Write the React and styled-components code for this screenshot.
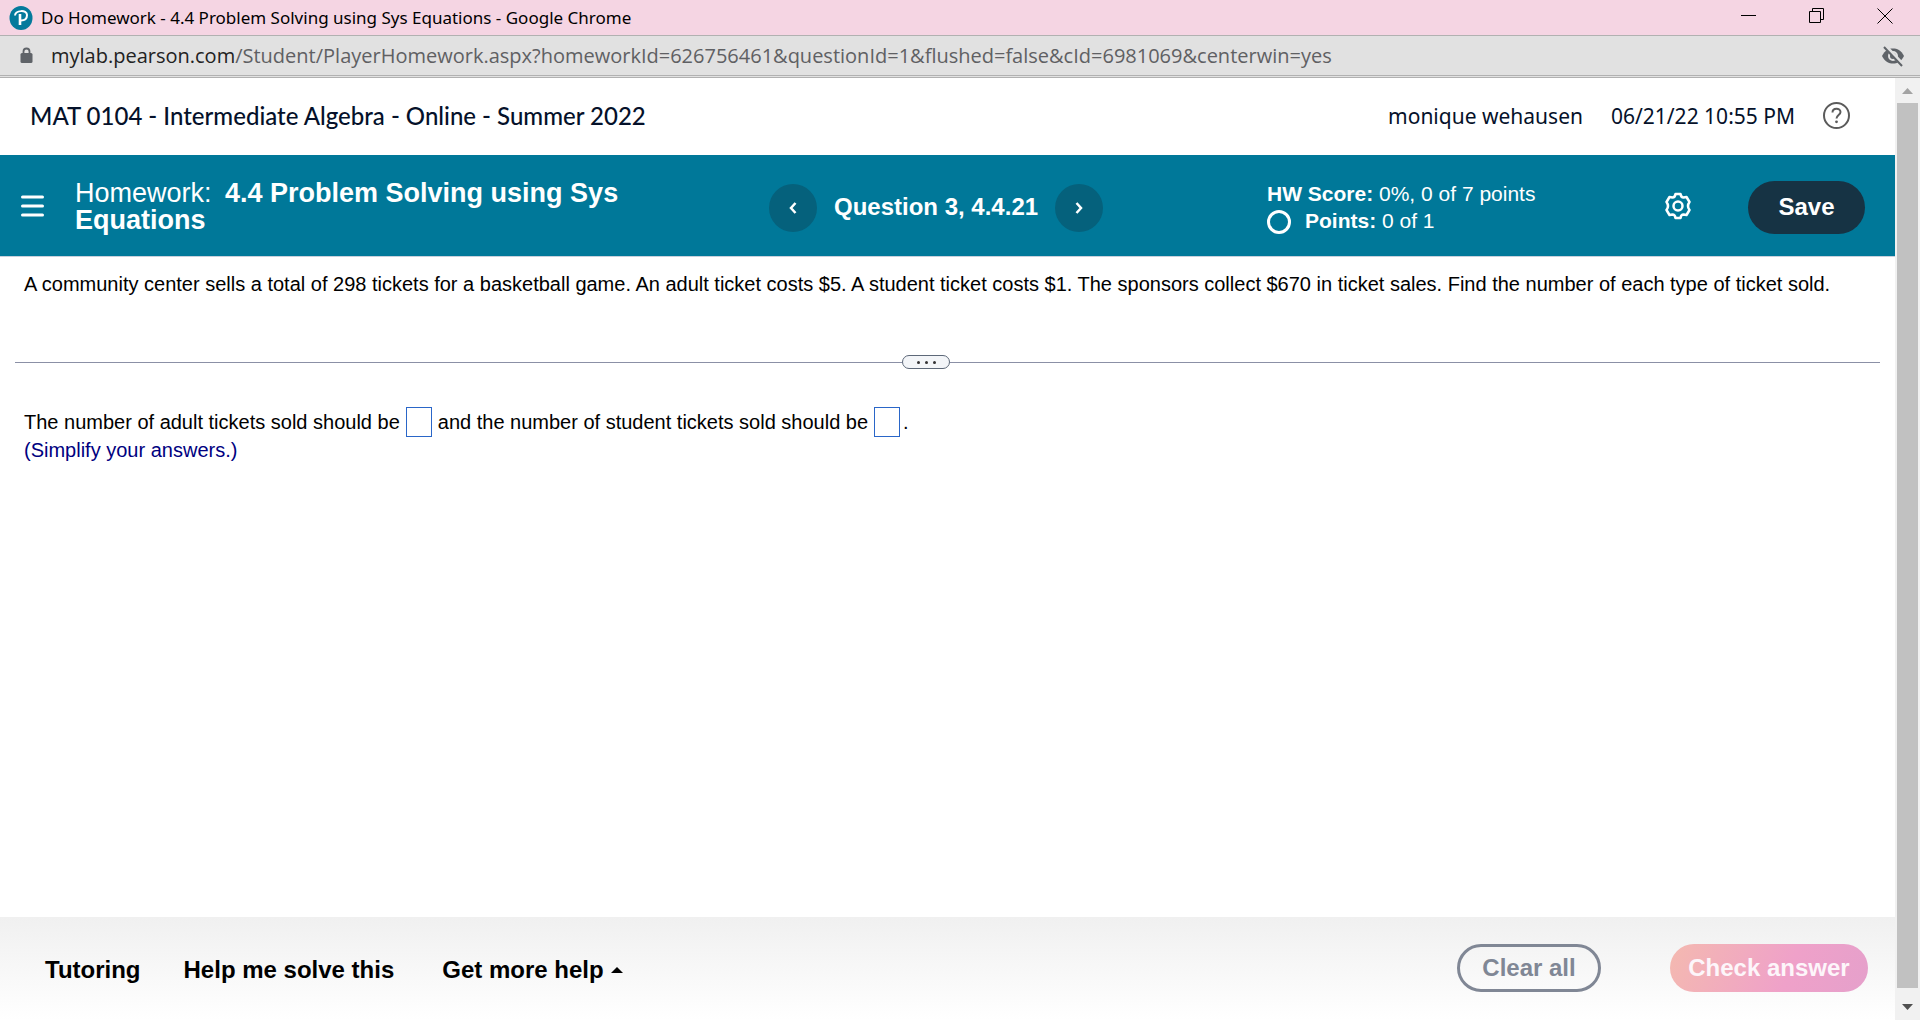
import React from 'react'
import styled, { createGlobalStyle } from 'styled-components'

const GlobalStyle = createGlobalStyle`
  * {
    box-sizing: border-box;
  }
  body {
    margin: 0;
    background: #fff;
    color: #000;
    font-family: "Liberation Sans", Arial, sans-serif;
  }
  button {
    padding: 0;
    border: none;
    background: none;
    color: inherit;
    font-family: inherit;
    cursor: pointer;
  }
`

const Window = styled.div`
  min-height: 100vh;
  display: flex;
  flex-direction: column;
`

const TitleBar = styled.div`
  height: 36px;
  padding: 0 27px 0 9px;
  display: flex;
  align-items: center;
  background: #f5d5e3;
  border-bottom: 1px solid #b1b1b1;
  font-family: "Noto Sans", sans-serif;
  font-size: 17px;
`

const TitleText = styled.span`
  flex: 1;
  margin-left: 8px;
`

const WindowButtons = styled.div`
  display: flex;
  gap: 52px;
  padding-bottom: 4px;

  button {
    display: flex;
  }
`

const AddressBar = styled.div`
  height: 42px;
  padding: 0 15px 0 20px;
  display: flex;
  align-items: center;
  background: #e1e1e1;
  border-bottom: 3px double #b1b1b1;
  color: #5f6063;
  font-family: "Open Sans", sans-serif;
  font-size: 20px;
`

const Url = styled.span`
  flex: 1;
  margin-left: 18px;

  b {
    color: #222;
    font-weight: 400;
  }
`

const Viewport = styled.div`
  flex: 1;
  display: flex;
`

const Page = styled.div`
  flex: 1;
  display: flex;
  flex-direction: column;
`

const CourseHeader = styled.header`
  height: 77px;
  padding: 0 45px 2px 30px;
  display: flex;
  align-items: center;
  color: #05112a;
  font-family: "Noto Sans", sans-serif;
  font-size: 21px;
`

const CourseName = styled.h1`
  flex: 1;
  margin: 0;
  font-family: Lato, sans-serif;
  font-size: 24px;
  font-weight: 500;
`

const UserName = styled.span`
  margin-right: 28px;
`

const HelpButton = styled.button`
  display: flex;
  margin-left: 28px;
`

const HomeworkBar = styled.section`
  height: 102px;
  padding: 4px 30px 0 21px;
  display: grid;
  grid-template-columns: 54px 694fr 498fr 398fr 83px 117px;
  align-items: center;
  background: #007899;
  border-bottom: 1px solid #c7d0dc;
  color: #fff;
`

const IconButton = styled.button`
  display: flex;
  padding-bottom: 4px;
`

const HomeworkTitle = styled.h2`
  max-width: 560px;
  margin: 0;
  padding-bottom: 2px;
  font-size: 27px;
  line-height: 27px;

  span {
    margin-right: 6px;
    font-weight: 400;
  }
`

const QuestionNav = styled.nav`
  display: flex;
  align-items: center;
  gap: 17px;
`

const QuestionName = styled.span`
  padding-bottom: 2px;
  font-size: 24px;
  font-weight: 700;
`

const RoundButton = styled.button`
  width: 48px;
  height: 48px;
  display: flex;
  align-items: center;
  justify-content: center;
  border-radius: 50%;
  background: #05617c;
`

const Score = styled.div`
  padding-bottom: 2px;
  font-size: 21px;
  line-height: 27px;
`

const PointsRow = styled.div`
  display: flex;
  align-items: flex-end;
  gap: 14px;
`

const PointsRing = styled.span`
  width: 24px;
  height: 24px;
  border: 3px solid #fff;
  border-radius: 50%;
`

const SaveButton = styled.button`
  height: 53px;
  padding-bottom: 2px;
  border-radius: 27px;
  background: #163344;
  font-size: 24px;
  font-weight: 700;
`

const Question = styled.p`
  margin: 0;
  padding: 13px 24px 0;
  font-size: 20px;
  line-height: 28px;
`

const Divider = styled.div`
  height: 14px;
  margin: 57px 15px 38px;
  display: flex;
  align-items: center;

  &::before,
  &::after {
    content: "";
    flex: 1;
    height: 1px;
    background: #8b90a6;
  }
  &::before {
    flex: 887;
  }
  &::after {
    flex: 930;
  }
`

const DividerHandle = styled.button`
  width: 48px;
  height: 14px;
  display: flex;
  align-items: center;
  justify-content: center;
  gap: 5px;
  border: 1px solid #5d6878;
  border-radius: 7px;
  background: #f3f5f8;

  i {
    width: 3px;
    height: 3px;
    border-radius: 50%;
    background: #333;
  }
`

const Answer = styled.form`
  flex: 1;
  padding: 0 24px;
  font-size: 20px;
  line-height: 26px;
`

const AnswerLine = styled.div`
  display: flex;
  align-items: center;
`

const AnswerInput = styled.input`
  width: 26px;
  height: 30px;
  margin: 0 ${props => props.$last ? '3px' : '6px'} 0 6px;
  padding: 0;
  border: 1px solid #2a66c8;
  background: #fff;
  font-size: 20px;
  text-align: center;
`

const Hint = styled.div`
  color: #00007f;
`

const Footer = styled.footer`
  height: 103px;
  padding: 0 27px 0 45px;
  display: flex;
  align-items: center;
  background: linear-gradient(#f0f0f0, #fff);
`

const HelpLink = styled.button`
  display: flex;
  align-items: center;
  gap: 7px;
  margin-right: ${props => props.$gap || 0}px;
  padding-top: 2px;
  font-size: 24px;
  font-weight: 700;
`

const PillButton = styled.button`
  width: ${props => props.$width}px;
  height: 48px;
  border-radius: 24px;
  font-size: 24px;
  font-weight: 700;
`

const FooterActions = styled.div`
  display: flex;
  gap: 69px;
  margin-left: auto;
  padding-bottom: 2px;
`

const ClearButton = styled(PillButton)`
  border: 3px solid #808795;
  color: #808795;
`

const CheckButton = styled(PillButton)`
  background: linear-gradient(110deg, #f4b9b0, #efa1c9 60%, #e5a0cb);
  color: #fdf6fa;
`

const Scrollbar = styled.div`
  width: 25px;
  padding: 0 2px;
  display: flex;
  flex-direction: column;
  align-items: center;
  background: #f1f1f1;

  svg {
    flex: none;
  }
`

const Thumb = styled.div`
  flex: 1;
  align-self: stretch;
  background: #c1c1c1;
`

const PearsonLogo = () => (
  <svg width="24" height="24" viewBox="0 0 24 24">
    <ellipse cx="12" cy="12" rx="11.500" ry="12" fill="#047a9c" />
    <path d="M6 9.500C6.500 4 18 3.500 18 9c0 4-3 5.500-6 5.500" fill="none" stroke="#fff" strokeWidth="2" />
    <path d="M11 8v11" stroke="#fff" strokeWidth="2.600" />
  </svg>
)

const LockIcon = () => (
  <svg width="13" height="17" viewBox="0 0 13 17">
    <path d="M3.500 7V4.500a3 3 0 0 1 6 0V7" fill="none" stroke="#5f6368" strokeWidth="1.800" />
    <rect x="0.500" y="6" width="12" height="10" rx="1.500" fill="#5f6368" />
  </svg>
)

const GearIcon = () => (
  <svg width="26" height="28" viewBox="0 0 26 28" fill="none" stroke="#fff" strokeWidth="2.500">
    <path d="M10.500 2h5q.5 3.500 3 3.500l3-.5 3 5q-3 4 0 8l-3 5-3-.5q-2.500 0-3 3.500h-5q-.5-3.500-3-3.500l-3 .5-3-5q3-4 0-8l3-5 3 .5q2.500 0 3-3.500z" strokeLinejoin="round" />
    <circle cx="13" cy="14" r="4.500" />
  </svg>
)

const Chevron = ({ d }) => (
  <svg width="10" height="14" viewBox="0 0 10 14">
    <path d={d} fill="none" stroke="#fff" strokeWidth="2.500" />
  </svg>
)

const App = () => {
  return (
    <Window>
      <GlobalStyle />
      <TitleBar>
        <PearsonLogo />
        <TitleText>Do Homework - 4.4 Problem Solving using Sys Equations - Google Chrome</TitleText>
        <WindowButtons>
          <button aria-label="Minimize">
            <svg width="16" height="16"><path d="M0 7.500h15" stroke="#000" /></svg>
          </button>
          <button aria-label="Restore">
            <svg width="16" height="16" fill="none" stroke="#000"><path d="M.5 3.500h11v11H.5zM3.500 3.500v-3h11v11h-3" /></svg>
          </button>
          <button aria-label="Close">
            <svg width="16" height="16"><path d="M.5.5l15 15M15.500.5l-15 15" stroke="#000" /></svg>
          </button>
        </WindowButtons>
      </TitleBar>
      <AddressBar>
        <LockIcon />
        <Url><b>mylab.pearson.com</b>/Student/PlayerHomework.aspx?homeworkId=626756461&amp;questionId=1&amp;flushed=false&amp;cId=6981069&amp;centerwin=yes</Url>
        <svg width="24" height="24" viewBox="0 0 24 24">
          <path d="M1 12C4 6 8 4.500 12 4.500S20 6 23 12c-3 6-7 7.500-11 7.500S4 18 1 12z" fill="#5f6368" />
          <circle cx="12" cy="12" r="4" fill="none" stroke="#e1e1e1" strokeWidth="2" />
          <path d="M4 2l18 19" stroke="#e1e1e1" strokeWidth="4" />
          <path d="M3 3l18 19" stroke="#5f6368" strokeWidth="2" />
        </svg>
      </AddressBar>
      <Viewport>
        <Page>
          <CourseHeader>
            <CourseName>MAT 0104 - Intermediate Algebra - Online - Summer 2022</CourseName>
            <UserName>monique wehausen</UserName>
            <span>06/21/22 10:55 PM</span>
            <HelpButton aria-label="Help">
              <svg width="27" height="27" viewBox="0 0 27 27" fill="none" stroke="#5b5b5b" strokeWidth="2">
                <circle cx="13.500" cy="13.500" r="12.500" />
                <path d="M9.500 10.500c0-5 8-5 8-.5 0 3-4 3-4 6.500" />
                <circle cx="13.500" cy="19.800" r="1.400" fill="#5b5b5b" stroke="none" />
              </svg>
            </HelpButton>
          </CourseHeader>
          <HomeworkBar>
            <IconButton aria-label="Menu">
              <svg width="23" height="22" stroke="#fff" strokeWidth="3" strokeLinecap="round"><path d="M1.500 2h20M1.500 11h20M1.500 20h20" /></svg>
            </IconButton>
            <HomeworkTitle><span>Homework:</span> 4.4 Problem Solving using Sys Equations</HomeworkTitle>
            <QuestionNav>
              <RoundButton aria-label="Previous question"><Chevron d="M7.500 2L3 7l4.500 5" /></RoundButton>
              <QuestionName>Question 3, 4.4.21</QuestionName>
              <RoundButton aria-label="Next question"><Chevron d="M2.500 2L7 7l-4.500 5" /></RoundButton>
            </QuestionNav>
            <Score>
              <div><b>HW Score:</b> 0%, 0 of 7 points</div>
              <PointsRow><PointsRing /><span><b>Points:</b> 0 of 1</span></PointsRow>
            </Score>
            <IconButton aria-label="Settings"><GearIcon /></IconButton>
            <SaveButton>Save</SaveButton>
          </HomeworkBar>
          <Question>
            A community center sells a total of 298 tickets for a basketball game. An adult ticket costs $5. A student ticket costs $1. The sponsors collect $670 in ticket sales. Find the number of each type of ticket sold.
          </Question>
          <Divider>
            <DividerHandle aria-label="Resize"><i /><i /><i /></DividerHandle>
          </Divider>
          <Answer>
            <AnswerLine>
              <label htmlFor="adult">The number of adult tickets sold should be</label>
              <AnswerInput id="adult" />
              <label htmlFor="student">and the number of student tickets sold should be</label>
              <AnswerInput id="student" $last />
              .
            </AnswerLine>
            <Hint>(Simplify your answers.)</Hint>
          </Answer>
          <Footer>
            <HelpLink $gap={43}>Tutoring</HelpLink>
            <HelpLink $gap={48}>Help me solve this</HelpLink>
            <HelpLink>
              Get more help
              <svg width="12" height="6"><path d="M0 6l6-6 6 6z" /></svg>
            </HelpLink>
            <FooterActions>
              <ClearButton $width={144}>Clear all</ClearButton>
              <CheckButton $width={198}>Check answer</CheckButton>
            </FooterActions>
          </Footer>
        </Page>
        <Scrollbar>
          <svg width="21" height="25"><path d="M5 16l5.500-6 5.500 6z" fill="#a3a3a3" /></svg>
          <Thumb />
          <svg width="21" height="32"><path d="M5 16h11l-5.500 6z" fill="#505050" /></svg>
        </Scrollbar>
      </Viewport>
    </Window>
  )
}

export default App
